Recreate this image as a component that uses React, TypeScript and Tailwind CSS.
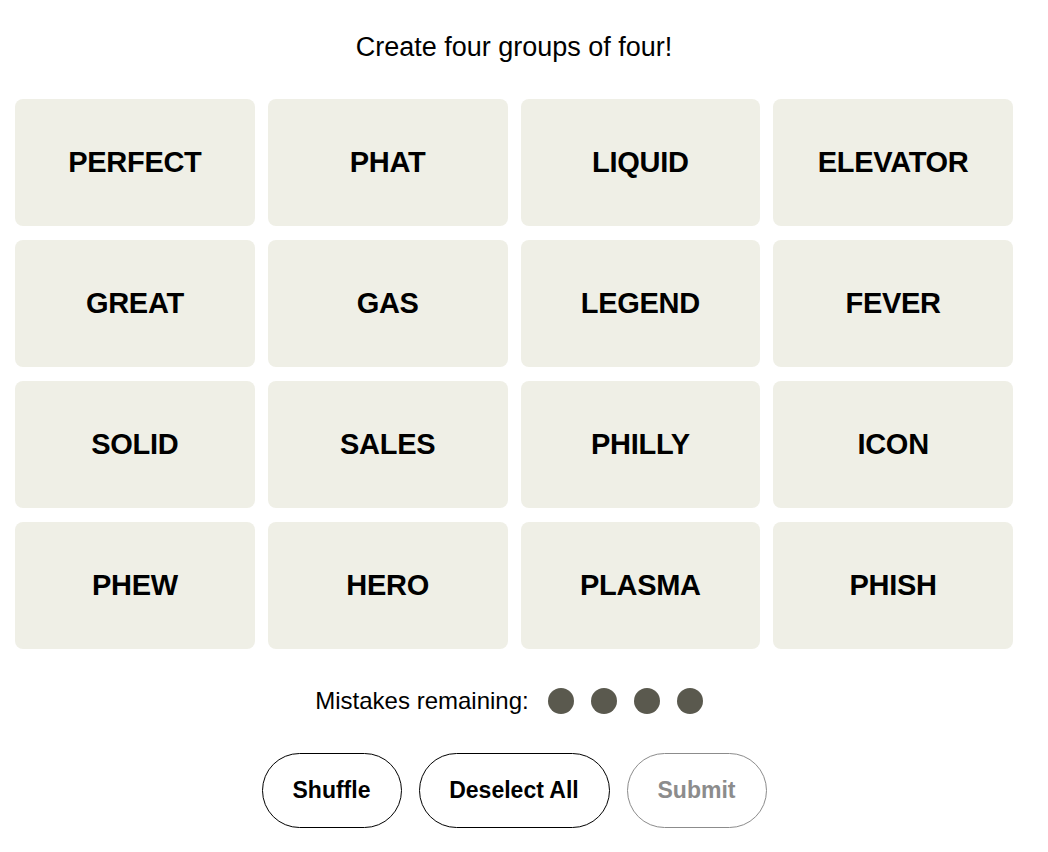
const words = [
  "PERFECT", "PHAT", "LIQUID", "ELEVATOR",
  "GREAT", "GAS", "LEGEND", "FEVER",
  "SOLID", "SALES", "PHILLY", "ICON",
  "PHEW", "HERO", "PLASMA", "PHISH",
];

const App = () => {
  return (
    <div className="w-[998px] ml-[15px] flex flex-col items-center font-['Liberation_Sans',Arial,sans-serif] text-black bg-white">
      <p className="mt-[32px] text-[27px] leading-[30px]">Create four groups of four!</p>
      <div className="mt-[37px] w-full grid grid-cols-4 gap-x-[13px] gap-y-[14px]">
        {words.map((w) => (
          <div
            key={w}
            className="h-[127px] rounded-lg bg-[#efefe6] flex items-center justify-center text-[29px] tracking-[-0.01em] font-bold"
          >
            {w}
          </div>
        ))}
      </div>
      <div className="mt-[34px] mr-[10px] flex items-center gap-[17px]">
        <span className="text-[24px] mr-[2px]">Mistakes remaining:</span>
        <span className="w-[26px] h-[26px] rounded-full bg-[#5a594e]" />
        <span className="w-[26px] h-[26px] rounded-full bg-[#5a594e]" />
        <span className="w-[26px] h-[26px] rounded-full bg-[#5a594e]" />
        <span className="w-[26px] h-[26px] rounded-full bg-[#5a594e]" />
      </div>
      <div className="mt-[34px] flex items-center gap-[17px]">
        <button className="w-[140px] h-[75px] rounded-full border border-black text-[23px] font-bold">
          Shuffle
        </button>
        <button className="w-[191px] h-[75px] rounded-full border border-black text-[23px] font-bold">
          Deselect All
        </button>
        <button className="w-[140px] h-[75px] rounded-full border border-[#8c8c8c] text-[#8c8c8c] text-[23px] font-bold">
          Submit
        </button>
      </div>
    </div>
  );
};

export default App;
